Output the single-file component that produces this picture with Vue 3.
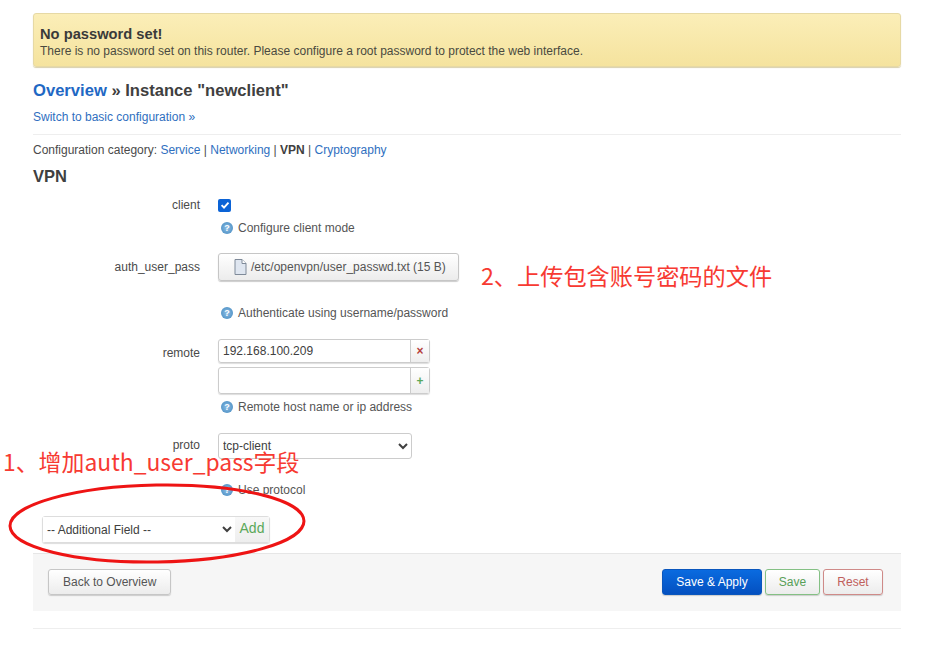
<script setup>
const categories = [
  { name: 'Service', link: true },
  { name: 'Networking', link: true },
  { name: 'VPN', link: false },
  { name: 'Cryptography', link: true }
];
</script>

<template>
  <div class="page">
    <div class="alert">
      <h4>No password set!</h4>
      <p>There is no password set on this router. Please configure a root password to protect the web interface.</p>
    </div>

    <h2 class="title"><a>Overview</a> » Instance "newclient"</h2>
    <a class="switch">Switch to basic configuration »</a>
    <hr class="rule" />

    <div class="cats">
      Configuration category:
      <template v-for="(c, i) in categories" :key="c.name">
        <a v-if="c.link">{{ c.name }}</a><b v-else>{{ c.name }}</b><span v-if="i < categories.length - 1"> | </span>
      </template>
    </div>

    <h3 class="section">VPN</h3>

    <div class="row row-client">
      <label>client</label>
      <div class="field">
        <span class="check">
          <svg width="12" height="12" viewBox="0 0 12 12"><path d="M2.6 6.2 5 8.6 9.5 3.6" fill="none" stroke="#fff" stroke-width="1.9" /></svg>
        </span>
      </div>
    </div>
    <div class="help help-client"><i class="q">?</i>Configure client mode</div>

    <div class="row row-file">
      <label>auth_user_pass</label>
      <div class="field">
        <button class="btn file-btn">
          <svg width="13" height="16" viewBox="0 0 13 16"><path d="M1 .5h7l4 4v11H1z" fill="#dfe6f0" stroke="#7f8a99" /><path d="M8 .5v4h4" fill="#fff" stroke="#7f8a99" /></svg>
          /etc/openvpn/user_passwd.txt (15 B)
        </button>
      </div>
    </div>
    <div class="help help-file"><i class="q">?</i>Authenticate using username/password</div>

    <div class="row row-remote">
      <label>remote</label>
      <div class="field">
        <div class="combo">
          <input value="192.168.100.209" />
          <span class="side del">×</span>
        </div>
        <div class="combo combo-add">
          <input />
          <span class="side add">+</span>
        </div>
      </div>
    </div>
    <div class="help help-remote"><i class="q">?</i>Remote host name or ip address</div>

    <div class="row row-proto">
      <label>proto</label>
      <div class="field">
        <select class="proto"><option>tcp-client</option></select>
      </div>
    </div>
    <div class="help help-proto"><i class="q">?</i>Use protocol</div>

    <div class="add-field">
      <select><option>-- Additional Field --</option></select>
      <span class="add-btn">Add</span>
    </div>

    <div class="actions">
      <button class="btn">Back to Overview</button>
      <div class="right">
        <button class="btn primary">Save &amp; Apply</button>
        <button class="btn save">Save</button>
        <button class="btn reset">Reset</button>
      </div>
    </div>
    <hr class="rule bottom" />

    <div class="note note-two">2、上传包含账号密码的文件</div>
    <div class="note note-one">1、增加auth_user_pass字段</div>
    <svg class="ellipse" width="310" height="92" viewBox="0 0 310 92">
      <ellipse cx="155" cy="45.5" rx="147" ry="38.5" transform="rotate(-1 155 46)" fill="none" stroke="#ee1414" stroke-width="3" />
    </svg>
  </div>
</template>

<style scoped>
.page {
  position: relative;
  width: 937px;
  height: 648px;
  box-sizing: border-box;
  padding: 13px 36px 0 33px;
  overflow: hidden;
  background: #fff;
  color: #4a4a4a;
  font: 12px/16px "Liberation Sans", Arial, sans-serif;
}

a {
  color: #2f6fc0;
}

.alert {
  height: 54px;
  box-sizing: border-box;
  padding: 12px 6px 0;
  border: 1px solid #e6d9a5;
  border-radius: 3px;
  background: linear-gradient(#fbeeb8, #f5e39e);
  box-shadow: 0 1px 1px #d9d0ac;
}

.alert h4 {
  margin: 0;
  font-size: 14.7px;
  line-height: 16px;
  color: #3a3a3a;
}

.alert p {
  margin: 2px 0 0;
  line-height: 15px;
  color: #4a4a40;
}

.title {
  margin: 14px 0 0;
  font-size: 16.6px;
  line-height: 20px;
  color: #404040;
}

.title a {
  color: #1f68c4;
}

.switch {
  display: block;
  margin-top: 8px;
  line-height: 16px;
}

.rule {
  margin: 9px 0 0;
  border: 0;
  border-top: 1px solid #eee;
}

.cats {
  margin-top: 7px;
  line-height: 16px;
}

.cats b {
  color: #404040;
}

.section {
  margin: 8px 0 0;
  font-size: 16.5px;
  line-height: 20px;
  color: #404040;
}

.row {
  display: grid;
  grid-template-columns: 167px 1fr;
  column-gap: 18px;
}

.row label {
  text-align: right;
}

.row-client {
  margin-top: 11px;
  align-items: center;
  height: 16px;
}

.check {
  display: flex;
  align-items: center;
  justify-content: center;
  width: 13px;
  height: 13px;
  border-radius: 2px;
  background: #0b63d6;
}

.help {
  display: flex;
  align-items: center;
  margin-left: 188px;
  line-height: 16px;
  color: #555;
}

.q {
  display: inline-block;
  width: 12px;
  height: 12px;
  margin-right: 5px;
  border-radius: 50%;
  background: radial-gradient(#8fbfe6, #3f86bd);
  color: #fff;
  font: bold 9px/12px "Liberation Sans", Arial, sans-serif;
  text-align: center;
}

.help-client {
  margin-top: 7px;
}

.row-file {
  margin-top: 17px;
  align-items: center;
}

.btn {
  box-sizing: border-box;
  height: 26px;
  padding: 0 14px;
  border: 1px solid #c6c6c6;
  border-radius: 3px;
  background: linear-gradient(#fff, #ececec);
  box-shadow: 0 1px 1px #ccc;
  color: #555;
  font: 12px "Liberation Sans", Arial, sans-serif;
}

.file-btn {
  display: flex;
  align-items: center;
  gap: 4px;
  width: 241px;
  height: 28px;
  padding: 0 0 0 15px;
}

.help-file {
  margin-top: 24px;
}

.row-remote {
  margin-top: 18px;
}

.row-remote label {
  padding-top: 6px;
}

.combo {
  display: flex;
  width: 212px;
  height: 24px;
  box-sizing: border-box;
  border: 1px solid #ccc;
  border-radius: 3px;
  box-shadow: 0 1px 1px #ddd;
}

.combo-add {
  height: 27px;
  margin-top: 4px;
}

.combo input {
  flex: 1;
  min-width: 0;
  border: 0;
  outline: 0;
  padding: 0 4px;
  background: transparent;
  color: #404040;
  font: 12px "Liberation Sans", Arial, sans-serif;
}

.side {
  display: flex;
  align-items: center;
  justify-content: center;
  width: 18px;
  border-left: 1px solid #ccc;
  background: linear-gradient(#fff, #eee);
  font: bold 12px/1 "Liberation Sans", Arial, sans-serif;
}

.del {
  color: #b5403c;
}

.add {
  color: #5aa85a;
}

.help-remote {
  margin-top: 5px;
}

.row-proto {
  margin-top: 18px;
  align-items: center;
}

.row-proto label {
  margin-top: -3px;
}

.proto {
  display: block;
  width: 194px;
  height: 26px;
  border: 1px solid #ccc;
  border-radius: 3px;
  background: #fff;
  color: #404040;
  font: 12px "Liberation Sans", Arial, sans-serif;
}

.help-proto {
  margin-top: 23px;
}

.add-field {
  display: flex;
  width: 228px;
  height: 27px;
  box-sizing: border-box;
  margin: 18px 0 0 9px;
  border: 1px solid #ddd;
  border-radius: 3px;
  box-shadow: 0 1px 1px #ddd;
}

.add-field select {
  flex: 1;
  min-width: 0;
  border: 0;
  outline: 0;
  background: #fff;
  color: #404040;
  font: 12px "Liberation Sans", Arial, sans-serif;
}

.add-btn {
  width: 34px;
  background: linear-gradient(#f8f8f8, #eee);
  color: #5aa85a;
  font-size: 14px;
  line-height: 23px;
  text-align: center;
}

.actions {
  display: flex;
  align-items: center;
  justify-content: space-between;
  height: 58px;
  box-sizing: border-box;
  margin-top: 10px;
  padding: 0 18px 2px 15px;
  border-top: 1px solid #e6e6e6;
  background: #f6f6f6;
}

.right {
  display: flex;
  gap: 3px;
}

.primary {
  width: 100px;
  padding: 0;
  border-color: #0a56bd;
  background: linear-gradient(#0a6be0, #0450c0);
  color: #fff;
}

.save {
  width: 55px;
  padding: 0;
  border-color: #84c084;
  color: #58a058;
}

.reset {
  width: 60px;
  padding: 0;
  border-color: #cf8a88;
  color: #c0605c;
}

.bottom {
  margin-top: 17px;
}

.note {
  position: absolute;
  color: #f73a32;
  font-family: "Noto Sans CJK SC", "Noto Sans", sans-serif;
  line-height: 30px;
  white-space: nowrap;
}

.note-two {
  left: 481px;
  top: 260px;
  font-size: 23.2px;
}

.note-one {
  left: 3px;
  top: 446px;
  font-size: 22.9px;
}

.ellipse {
  position: absolute;
  left: 2px;
  top: 478px;
}
</style>
